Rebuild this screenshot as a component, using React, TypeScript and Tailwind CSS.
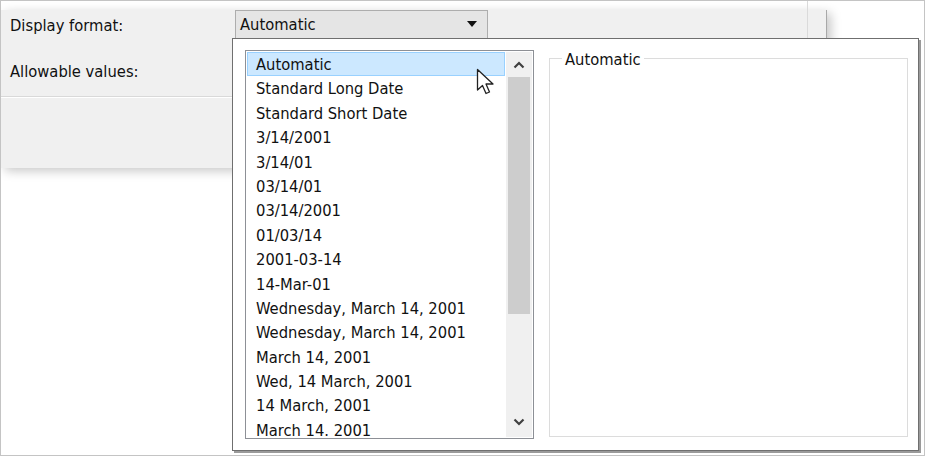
import React from "react";

const formats = [
  "Automatic",
  "Standard Long Date",
  "Standard Short Date",
  "3/14/2001",
  "3/14/01",
  "03/14/01",
  "03/14/2001",
  "01/03/14",
  "2001-03-14",
  "14-Mar-01",
  "Wednesday, March 14, 2001",
  "Wednesday, March 14, 2001",
  "March 14, 2001",
  "Wed, 14 March, 2001",
  "14 March, 2001",
  "March 14. 2001",
];

const font = { fontFamily: '"DejaVu Sans Condensed", "DejaVu Sans", sans-serif' };

function Chevron({ up }: { up?: boolean }) {
  return (
    <svg width="12" height="8" viewBox="0 0 12 8">
      <path
        d={up ? "M1.5 6.5 L6 2 L10.5 6.5" : "M1.5 1.5 L6 6 L10.5 1.5"}
        fill="none"
        stroke="#404040"
        strokeWidth="2.2"
      />
    </svg>
  );
}

function Cursor() {
  return (
    <svg width="20" height="30" viewBox="0 0 20 30" className="absolute left-[475px] top-[67px]">
      <path
        d="M1.5 1.5 L1.5 22 L6.5 17.5 L10 25.5 L13.5 24 L10 16 L17 16 Z"
        fill="#fff"
        stroke="#222"
        strokeWidth="1.3"
        strokeLinejoin="round"
      />
    </svg>
  );
}

export default function App() {
  return (
    <div
      className="relative w-[925px] h-[456px] bg-white border border-[#c4c4c4] overflow-hidden text-[#111] text-[16.4px]"
      style={font}
    >
      {/* background dialog */}
      <div className="w-[826px] h-[158px] bg-[#f0f0f0] border-r border-[#a8a8a8] shadow-[4px_3px_10px_rgba(0,0,0,0.22)]">
        <div className="flex items-center h-[28px] mt-[9px]">
          <div className="w-[234px] pl-[9px] pt-[4px]">Display format:</div>
          <div className="flex items-center justify-between w-[253px] h-[29px] bg-[#e5e5e5] border border-[#adadad] pl-[4px] pr-[10px] pt-[3px]">
            <span>Automatic</span>
            <svg width="10" height="6" viewBox="0 0 10 6" className="-mt-[3px]">
              <path d="M0 0 H10 L5 6 Z" fill="#111" />
            </svg>
          </div>
          <div className="flex-1 h-[38px] -mt-[10px] border-r border-[#dadada] mr-[18px]" />
        </div>
        <div className="h-[58px] flex items-center pl-[9px] pt-[10px]">Allowable values:</div>
        <div className="border-t border-[#d9d9d9] border-b border-b-white" />
      </div>

      {/* dropdown popup */}
      <div className="absolute left-[231px] top-[37px] w-[687px] h-[413px] bg-white border border-[#6f6f6f] shadow-[2px_2px_0_#9a9a9a] flex pl-[12px] pt-[11px]">
        <div className="w-[289px] h-[389px] border border-[#8d9096] flex">
          <div className="flex-1 p-[1px] overflow-hidden">
            {formats.map((f, i) => (
              <div
                key={i}
                className={
                  i === 0
                    ? "h-[24.4px] leading-[22.4px] pt-[1px] pl-[8px] bg-[#cce8ff] border border-[#99d1ff] whitespace-nowrap"
                    : "h-[24.4px] leading-[24.4px] pt-[1px] pl-[9px] whitespace-nowrap"
                }
              >
                {f}
              </div>
            ))}
          </div>
          <div className="w-[26px] mr-[1px] my-[1px] bg-[#f0f0f0] flex flex-col items-center">
            <div className="h-[25px] w-full flex items-center justify-center">
              <Chevron up />
            </div>
            <div className="w-[22px] h-[237px] bg-[#cdcdcd]" />
            <div className="flex-1" />
            <div className="h-[30px] w-full flex items-center justify-center">
              <Chevron />
            </div>
          </div>
        </div>
        <div className="relative ml-[15px] mt-[8px] mr-[10px] h-[379px] flex-1 border border-[#dcdcdc]">
          <span className="absolute left-[12px] -top-[9px] bg-white px-[3px] leading-[20px]">Automatic</span>
        </div>
      </div>

      <Cursor />
    </div>
  );
}
